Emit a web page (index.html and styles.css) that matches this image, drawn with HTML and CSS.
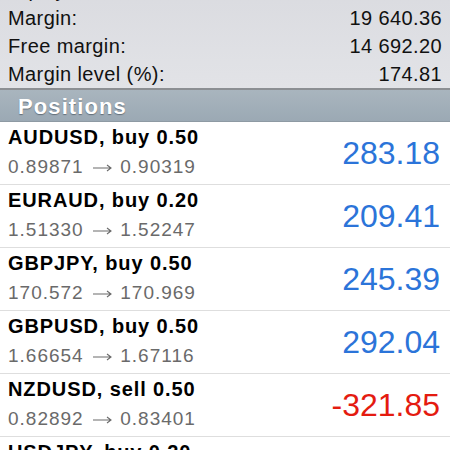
FILE: index.html
```html
<!DOCTYPE html>
<html lang="en">
<head>
    <meta charset="UTF-8">
    <title>Trade</title>
    <link rel="stylesheet" href="styles.css">
</head>
<body>
    <div class="summary">
        <div class="sum-row"><span>Equity:</span><span>19 640.36</span></div>
        <div class="sum-row"><span>Margin:</span><span>19 640.36</span></div>
        <div class="sum-row"><span>Free margin:</span><span>14 692.20</span></div>
        <div class="sum-row"><span>Margin level (%):</span><span>174.81</span></div>
    </div>

    <div class="section-head">Positions</div>

    <div class="positions">
        <div class="pos">
            <div class="pos-info">
                <div class="pos-title">AUDUSD, buy 0.50</div>
                <div class="pos-price">0.89871 <svg class="arrow" viewBox="0 0 20 10"><path d="M1 5H19M15 2L19 5L15 8"/></svg> 0.90319</div>
            </div>
            <div class="pos-profit">283.18</div>
        </div>
        <div class="pos">
            <div class="pos-info">
                <div class="pos-title">EURAUD, buy 0.20</div>
                <div class="pos-price">1.51330 <svg class="arrow" viewBox="0 0 20 10"><path d="M1 5H19M15 2L19 5L15 8"/></svg> 1.52247</div>
            </div>
            <div class="pos-profit">209.41</div>
        </div>
        <div class="pos">
            <div class="pos-info">
                <div class="pos-title">GBPJPY, buy 0.50</div>
                <div class="pos-price">170.572 <svg class="arrow" viewBox="0 0 20 10"><path d="M1 5H19M15 2L19 5L15 8"/></svg> 170.969</div>
            </div>
            <div class="pos-profit">245.39</div>
        </div>
        <div class="pos">
            <div class="pos-info">
                <div class="pos-title">GBPUSD, buy 0.50</div>
                <div class="pos-price">1.66654 <svg class="arrow" viewBox="0 0 20 10"><path d="M1 5H19M15 2L19 5L15 8"/></svg> 1.67116</div>
            </div>
            <div class="pos-profit">292.04</div>
        </div>
        <div class="pos">
            <div class="pos-info">
                <div class="pos-title">NZDUSD, sell 0.50</div>
                <div class="pos-price">0.82892 <svg class="arrow" viewBox="0 0 20 10"><path d="M1 5H19M15 2L19 5L15 8"/></svg> 0.83401</div>
            </div>
            <div class="pos-profit loss">-321.85</div>
        </div>
        <div class="pos">
            <div class="pos-info">
                <div class="pos-title">USDJPY, buy 0.20</div>
                <div class="pos-price">101.512 <svg class="arrow" viewBox="0 0 20 10"><path d="M1 5H19M15 2L19 5L15 8"/></svg> 101.871</div>
            </div>
            <div class="pos-profit">70.49</div>
        </div>
    </div>
</body>
</html>
```

FILE: styles.css
```css
:root {
    --blue: #2b74d9;
    --red: #e41b10;
}

body {
    margin: 0;
    background: #fff;
    font-family: "Liberation Sans", Arial, sans-serif;
    height: 450px;
    overflow: hidden;
}

.summary {
    margin-top: -24px;
    padding: 0 8px 0 8px;
    background: linear-gradient(#d9dadf, #e2e3e7);
    border-bottom: 2px solid #8c8f93;
}

.sum-row {
    display: flex;
    justify-content: space-between;
    height: 28px;
    line-height: 28px;
    font-size: 20px;
    letter-spacing: 0.4px;
    color: #111;
}

.section-head {
    height: 31px;
    line-height: 33px;
    padding-left: 18px;
    background: linear-gradient(#a9b5be, #9ba9b4);
    border-bottom: 1px solid #8e9aa3;
    color: #fff;
    font-size: 22px;
    font-weight: bold;
    letter-spacing: 1.1px;
    text-shadow: 0 1px 1px rgba(60, 70, 80, 0.6);
}

.pos {
    display: flex;
    align-items: center;
    justify-content: space-between;
    height: 62px;
    padding: 0 10px 0 8px;
    border-bottom: 1px solid #dedede;
}

.pos-title {
    font-size: 20px;
    font-weight: bold;
    letter-spacing: 0.9px;
    color: #000;
    line-height: 27px;
}

.pos-price {
    font-size: 19px;
    letter-spacing: 1px;
    color: #6a6a6a;
    line-height: 32px;
}

.arrow {
    width: 20px;
    height: 10px;
    margin: 0 2px;
    fill: none;
    stroke: #6a6a6a;
    stroke-width: 1.1;
}

.pos-profit {
    font-size: 32px;
    color: var(--blue);
}

.pos-profit.loss {
    color: var(--red);
}
```
